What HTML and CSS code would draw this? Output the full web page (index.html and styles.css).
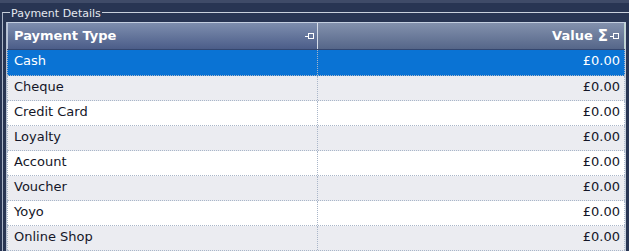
FILE: index.html
```html
<!DOCTYPE html>
<html>
<head>
<meta charset="utf-8">
<link rel="stylesheet" href="styles.css">
</head>
<body>
<div class="topbar"></div>
<div class="group">
  <span class="legend">Payment Details</span>
  <div class="grid">
    <div class="head">
      <div class="hcell hcell-left">
        <span class="htext">Payment Type</span>
        <svg class="pin" width="10" height="7" viewBox="0 0 10 7"><path d="M0 3.5H3.5" stroke="#fff" stroke-width="1"/><rect x="3.5" y="0.5" width="5" height="5" fill="none" stroke="#fff" stroke-width="1"/><path d="M3.5 5.5H9" stroke="#fff" stroke-width="1"/></svg>
      </div>
      <div class="hcell hcell-right">
        <span class="htext">Value</span>
        <span class="sigma">Σ</span>
        <svg class="pin" width="10" height="7" viewBox="0 0 10 7"><path d="M0 3.5H3.5" stroke="#fff" stroke-width="1"/><rect x="3.5" y="0.5" width="5" height="5" fill="none" stroke="#fff" stroke-width="1"/><path d="M3.5 5.5H9" stroke="#fff" stroke-width="1"/></svg>
      </div>
    </div>
    <div class="row selected"><div class="cell">Cash</div><div class="cell num">£0.00</div></div>
    <div class="row alt"><div class="cell">Cheque</div><div class="cell num">£0.00</div></div>
    <div class="row"><div class="cell">Credit Card</div><div class="cell num">£0.00</div></div>
    <div class="row alt"><div class="cell">Loyalty</div><div class="cell num">£0.00</div></div>
    <div class="row"><div class="cell">Account</div><div class="cell num">£0.00</div></div>
    <div class="row alt"><div class="cell">Voucher</div><div class="cell num">£0.00</div></div>
    <div class="row"><div class="cell">Yoyo</div><div class="cell num">£0.00</div></div>
    <div class="row alt"><div class="cell">Online Shop</div><div class="cell num">£0.00</div></div>
  </div>
</div>
</body>
</html>
```
FILE: styles.css
```css
html, body {
  margin: 0;
  padding: 0;
}
body {
  width: 629px;
  height: 251px;
  overflow: hidden;
  background: #283553;
  font-family: "DejaVu Sans", Verdana, sans-serif;
}
.topbar {
  height: 3px;
  background: #3f4b68;
}
.group {
  position: relative;
  margin-top: 9px;
  margin-left: 2px;
  border-top: 1px solid #c9d0dc;
  border-left: 1px solid #aab4c6;
  padding: 9px 0 0 3px;
  height: 239px;
  box-sizing: border-box;
}
.legend {
  position: absolute;
  top: -6px;
  left: 7px;
  padding: 0 1px;
  background: #283553;
  color: #e4e8ef;
  font-size: 11px;
  line-height: 13px;
}
.grid {
  width: 620px;
  box-sizing: border-box;
  border-left: 1px solid #b5bfd0;
  border-right: 1px solid #c7d0dc;
}
.head {
  display: grid;
  grid-template-columns: 311px 307px;
  height: 28px;
  box-sizing: border-box;
  border-top: 1px solid #c3cee0;
  border-bottom: 1px solid #34466e;
}
.hcell {
  display: flex;
  align-items: center;
  box-sizing: border-box;
  line-height: 26px;
  font-size: 13px;
  font-weight: bold;
  color: #ffffff;
}
.hcell-left {
  background: linear-gradient(#7e8eae, #4b5d89);
  border-left: 1px solid #b8c4da;
  border-right: 1px solid #d6dde8;
  padding: 0 2px 0 6px;
}
.hcell-right {
  background: linear-gradient(#8391ad, #556689);
  border-right: 1px solid #b9d4cc;
  padding: 0 4px 0 6px;
  justify-content: flex-end;
}
.htext {
  flex: 1;
}
.hcell-right .htext {
  flex: 0 0 auto;
  margin-right: 5px;
}
.sigma {
  font-size: 15px;
  margin-right: 2px;
}
.pin {
  display: block;
  flex: 0 0 auto;
}
.row {
  display: grid;
  grid-template-columns: 311px 307px;
  height: 25px;
  box-sizing: border-box;
  border-bottom: 1px dotted #a9b6c9;
  background: #ffffff;
  color: #141628;
}
.row.alt {
  background: #ebecf1;
}
.row.selected {
  height: 26px;
  background: #0a73d4;
  color: #ffffff;
}
.cell {
  box-sizing: border-box;
  font-size: 13px;
  line-height: 21px;
  padding: 0 6px 0 7px;
  border-right: 1px dotted #a9b6c9;
  white-space: nowrap;
}
.cell:first-child {
  border-left: 1px dotted #a9b6c9;
  padding-left: 6px;
}
.num {
  text-align: right;
  padding-right: 4px;
}
```
